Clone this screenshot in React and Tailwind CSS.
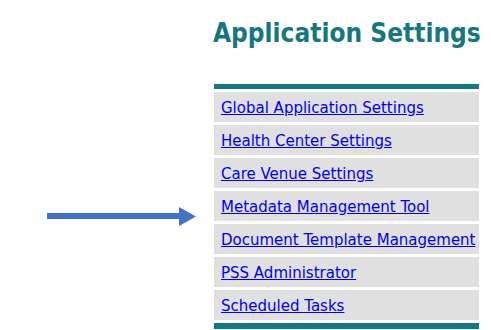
import React from "react";

const links = [
  "Global Application Settings",
  "Health Center Settings",
  "Care Venue Settings",
  "Metadata Management Tool",
  "Document Template Management",
  "PSS Administrator",
  "Scheduled Tasks",
];

export default function App() {
  return (
    <div
      className="relative w-[491px] h-[330px] overflow-hidden bg-white"
      style={{ fontFamily: '"DejaVu Sans", Verdana, sans-serif' }}
    >
      <div className="flex">
        <div className="w-[213px] shrink-0" />
        <div className="flex flex-col">
          <h1
            className="mt-[17px] text-[26px] leading-[32px] font-bold text-[#16777f] whitespace-nowrap [font-stretch:condensed]"
            style={{ fontFamily: '"DejaVu Sans Condensed", "DejaVu Sans", sans-serif' }}
          >
            Application Settings
          </h1>
          <div className="mt-[35px] ml-[1px] w-[265px] border-t-[5px] border-b-[6px] border-[#137880] flex flex-col gap-[3px] py-[3px]">
            {links.map((l) => (
              <div key={l} className="h-[30px] bg-[#e0e0e0] flex items-center px-[7px] pt-[2px]">
                <a href="#" className="text-[15px] text-[#0000ee] underline whitespace-nowrap">
                  {l}
                </a>
              </div>
            ))}
          </div>
        </div>
      </div>
      <svg className="absolute left-[47px] top-[207px]" width="150" height="19" viewBox="0 0 150 19">
        <rect x="0" y="6" width="133" height="6" fill="#4472c4" />
        <polygon points="132,0 149,9.5 132,19" fill="#4472c4" />
      </svg>
    </div>
  );
}
